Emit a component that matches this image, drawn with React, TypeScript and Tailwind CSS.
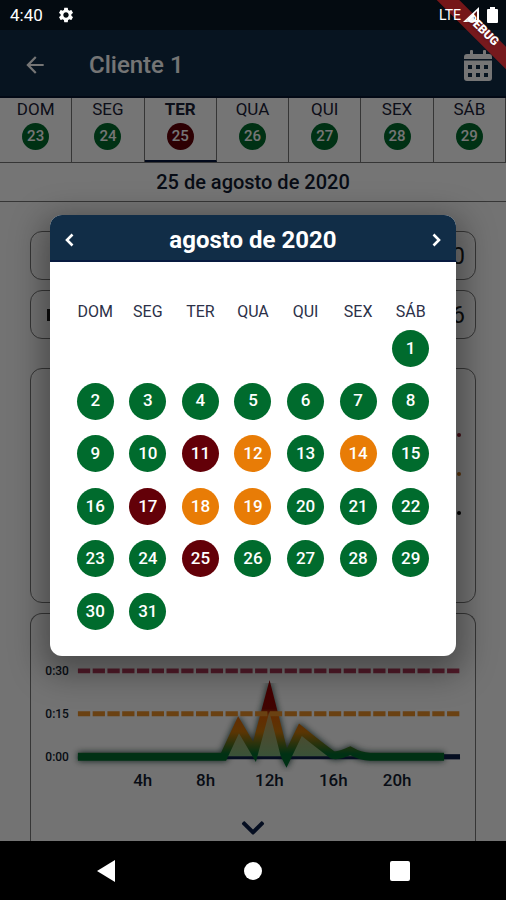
import { FaChevronDown } from 'react-icons/fa'
import { MdArrowBack, MdSettings } from 'react-icons/md'

const WEEKDAYS = ['DOM', 'SEG', 'TER', 'QUA', 'QUI', 'SEX', 'SÁB']

// days that are not green
const LEVELS: Record<number, string> = {
    11: 'bg-[#630008]',
    12: 'bg-[#e87c06]',
    14: 'bg-[#e87c06]',
    17: 'bg-[#630008]',
    18: 'bg-[#e87c06]',
    19: 'bg-[#e87c06]',
    25: 'bg-[#630008]',
}

const DAYS = Array.from({ length: 31 }, (_, i) => i + 1)

function StatusBar() {
    return (
        <div className="flex h-[30px] items-center justify-between bg-[#091826] pr-2 pl-[10px] text-white">
            <div className="relative z-20 flex items-center gap-3.5">
                <span className="text-[17px] leading-5">4:40</span>
                <MdSettings className="size-[18px]" />
            </div>
            <div className="relative z-20 flex items-center">
                <span className="text-sm leading-5">LTE</span>
                <svg className="mr-2 ml-0.5 h-4 w-4" viewBox="0 0 16 16">
                    <path d="M0 15 16 0V15Z" fill="#fff" />
                    <path d="M11 7 14 4V13H11Z" fill="#5a1418" />
                </svg>
                <svg className="h-4 w-[11px]" viewBox="0 0 11 16">
                    <path d="M3 0H8V2H10Q11 2 11 3V15Q11 16 10 16H1Q0 16 0 15V3Q0 2 1 2H3Z" fill="#fff" />
                </svg>
            </div>
        </div>
    )
}

function AppBar() {
    return (
        <header className="flex h-[68px] items-center border-b-2 border-[#06142e] bg-[#112d47] pr-[14px] pl-[22px] text-white">
            <button type="button" aria-label="Voltar" className="pt-1">
                <MdArrowBack className="size-[26px]" />
            </button>
            <h1 className="ml-[41px] flex-1 pt-1 text-2xl font-medium">Cliente 1</h1>
            <button type="button" aria-label="Calendário" className="pt-1">
                <svg className="h-[31px] w-[28px]" viewBox="0 0 28 31" fill="currentColor">
                    <path d="M6 1Q6 0 7 0H8Q9 0 9 1V4H19V1Q19 0 20 0H21Q22 0 22 1V4H25Q28 4 28 7V9H0V7Q0 4 3 4H6Z" />
                    <path
                        fillRule="evenodd"
                        d="M0 10.500H28V28Q28 31 25 31H3Q0 31 0 28ZM4 15V19H8V15ZM12 15V19H16V15ZM20 15V19H24V15ZM4 23V27H8V23ZM12 23V27H16V23ZM20 23V27H24V23Z"
                    />
                </svg>
            </button>
        </header>
    )
}

function WeekStrip() {
    return (
        <div className="grid h-[65px] grid-cols-7 border-b border-[#777] bg-white">
            {WEEKDAYS.map((name, i) => {
                const day = 23 + i
                const active = day === 25
                return (
                    <button
                        key={name}
                        type="button"
                        className={`flex flex-col items-center gap-[3px] border-r border-[#777] ${active ? 'border-b-2 border-b-[#06143c] font-bold' : ''}`}
                    >
                        <span className="text-[17px] leading-[22px] text-[#1c2238]">{name}</span>
                        <span
                            className={`flex size-[27px] items-center justify-center rounded-full text-[15px] font-medium text-white ${LEVELS[day] ?? 'bg-[#006b2d]'}`}
                        >
                            {day}
                        </span>
                    </button>
                )
            })}
        </div>
    )
}

const LINE =
    'M47 143H193L208 111L224 138L239 82L254 141L256 145L270 116Q287 130 302 141Q308 143 320 137Q330 143 340 143H414'

function UsageChart() {
    return (
        <svg className="w-full" viewBox="0 0 445 185" role="img" aria-label="Uso por hora">
            <defs>
                <linearGradient id="level" gradientUnits="userSpaceOnUse" x1="0" y1="72" x2="0" y2="144">
                    <stop offset="0" stopColor="#900" />
                    <stop offset="0.320" stopColor="#8c0c06" />
                    <stop offset="0.420" stopColor="#d86206" />
                    <stop offset="0.640" stopColor="#c87408" />
                    <stop offset="0.950" stopColor="#006b2d" />
                </linearGradient>
                <linearGradient id="area" gradientUnits="userSpaceOnUse" x1="0" y1="90" x2="0" y2="144">
                    <stop offset="0" stopColor="#d8904c" />
                    <stop offset="1" stopColor="#7cb47c" />
                </linearGradient>
                <filter id="glow" x="-5%" y="-20%" width="110%" height="140%">
                    <feGaussianBlur stdDeviation="3" />
                </filter>
            </defs>
            <g className="fill-[#121c30] text-xs font-medium" textAnchor="end">
                <text x="38" y="61">0:30</text>
                <text x="38" y="104">0:15</text>
                <text x="38" y="147">0:00</text>
            </g>
            <path d="M47 57H430" stroke="#b63c5c" strokeWidth="5" strokeDasharray="12.300 2.500" />
            <path d={LINE} fill="none" stroke="#0a2a22" strokeWidth="9" filter="url(#glow)" opacity="0.800" />
            <path d={`${LINE}Z`} fill="url(#area)" />
            <path d="M47 144H430" stroke="#0c1f48" strokeWidth="3" />
            <path d="M410 143H430" stroke="#0c1f48" strokeWidth="5" />
            <path d={LINE} fill="none" stroke="url(#level)" strokeWidth="8" strokeLinejoin="miter" strokeMiterlimit="10" />
            <path d="M47 100H430" stroke="#e88f28" strokeWidth="5" strokeDasharray="12.300 2.500" />
            <g className="fill-[#121c30] text-[17px] font-medium" textAnchor="middle">
                <text x="112" y="172">4h</text>
                <text x="175" y="172">8h</text>
                <text x="239" y="172">12h</text>
                <text x="303" y="172">16h</text>
                <text x="367" y="172">20h</text>
            </g>
        </svg>
    )
}

function MonthDialog() {
    return (
        <div
            role="dialog"
            aria-label="agosto de 2020"
            className="w-full overflow-hidden rounded-xl bg-white shadow-[0_10px_32px_8px_rgba(0,0,0,0.35)]"
        >
            <div className="flex h-[47px] items-center justify-between border-b-2 border-[#081a40] bg-[#112d47] px-[14px] pt-1 text-white">
                <button type="button" aria-label="Mês anterior">
                    <svg className="h-3.5 w-3" viewBox="0 0 12 14" fill="none" stroke="currentColor" strokeWidth="2.600">
                        <path d="M8.500 1.500 3 7 8.500 12.500" />
                    </svg>
                </button>
                <h2 className="text-2xl font-bold">agosto de 2020</h2>
                <button type="button" aria-label="Próximo mês">
                    <svg className="h-3.5 w-3" viewBox="0 0 12 14" fill="none" stroke="currentColor" strokeWidth="2.600">
                        <path d="M3.500 1.500 9 7 3.500 12.500" />
                    </svg>
                </button>
            </div>
            <div className="px-[19px] pt-10 pb-[18px]">
                <div className="grid grid-cols-7 text-center text-base leading-5 text-[#2c3148]">
                    {WEEKDAYS.map((name) => (
                        <span key={name}>{name}</span>
                    ))}
                </div>
                <div className="grid grid-cols-7">
                    {DAYS.map((day) => (
                        <div
                            key={day}
                            className={`flex aspect-square items-center justify-center ${day === 1 ? 'col-start-7' : ''}`}
                        >
                            <button
                                type="button"
                                className={`size-[37px] rounded-full text-[17px] font-medium text-white ${LEVELS[day] ?? 'bg-[#006b2d]'}`}
                            >
                                {day}
                            </button>
                        </div>
                    ))}
                </div>
            </div>
        </div>
    )
}

function NavBar() {
    return (
        <nav className="flex h-[59px] items-center justify-between bg-black px-[82px] text-white">
            <button type="button" aria-label="Voltar" className="flex size-12 items-center justify-center">
                <svg className="h-[22px] w-[18px]" viewBox="0 0 18 22" fill="currentColor">
                    <path d="M18 0V22L0 11Z" />
                </svg>
            </button>
            <button type="button" aria-label="Início" className="flex size-12 items-center justify-center">
                <span className="size-[18px] rounded-full bg-white" />
            </button>
            <button type="button" aria-label="Recentes" className="flex size-12 items-center justify-center">
                <span className="size-5 rounded-xs bg-white" />
            </button>
        </nav>
    )
}

export default function App() {
    return (
        <div className="flex min-h-screen flex-col bg-black font-['Roboto',sans-serif]">
            <div className="relative flex flex-1 flex-col overflow-hidden bg-[#fafafa]">
                <StatusBar />
                <AppBar />
                <WeekStrip />
                <div className="border-b border-[#777] bg-white text-center text-xl leading-[38px] font-medium text-[#121c30]">
                    25 de agosto de 2020
                </div>

                <main className="flex flex-1 flex-col px-[30px] pt-[29px] text-2xl text-[#1c1c1c]">
                    <div className="flex h-[49px] items-center justify-end rounded-xl border border-[#777] px-[10px]">0</div>
                    <div className="mt-[10px] flex h-[49px] items-center justify-between rounded-xl border border-[#777] pr-[10px] pl-4">
                        <span className="h-3 w-1 bg-[#1c1c1c]" />
                        <span>6</span>
                    </div>
                    <div className="mt-[29px] flex h-[235px] flex-col items-end gap-[35px] rounded-xl border border-[#777] pt-16 pr-[14px]">
                        <span className="size-1 rounded-full bg-[#8c1c2c]" />
                        <span className="size-1 rounded-full bg-[#c0701c]" />
                        <span className="size-1 rounded-full bg-black" />
                    </div>
                    <div className="mt-[10px] flex flex-1 flex-col items-center rounded-t-xl border-x border-t border-[#777]">
                        <UsageChart />
                        <button type="button" aria-label="Expandir" className="mt-4 text-[#0c1f48]">
                            <FaChevronDown className="size-[26px]" />
                        </button>
                    </div>
                </main>

                <div className="absolute inset-0 z-10 flex items-center justify-center bg-black/54 px-[50px] pt-[30px]">
                    <MonthDialog />
                </div>

                <div className="absolute top-[22px] -right-[34px] z-10 h-4 w-[124px] rotate-45 bg-[#b71c1c]/63" />
                <span className="absolute top-[22px] right-1 z-30 rotate-45 text-xs leading-4 font-black text-white text-shadow-sm">
                    DEBUG
                </span>
            </div>
            <NavBar />
        </div>
    )
}
